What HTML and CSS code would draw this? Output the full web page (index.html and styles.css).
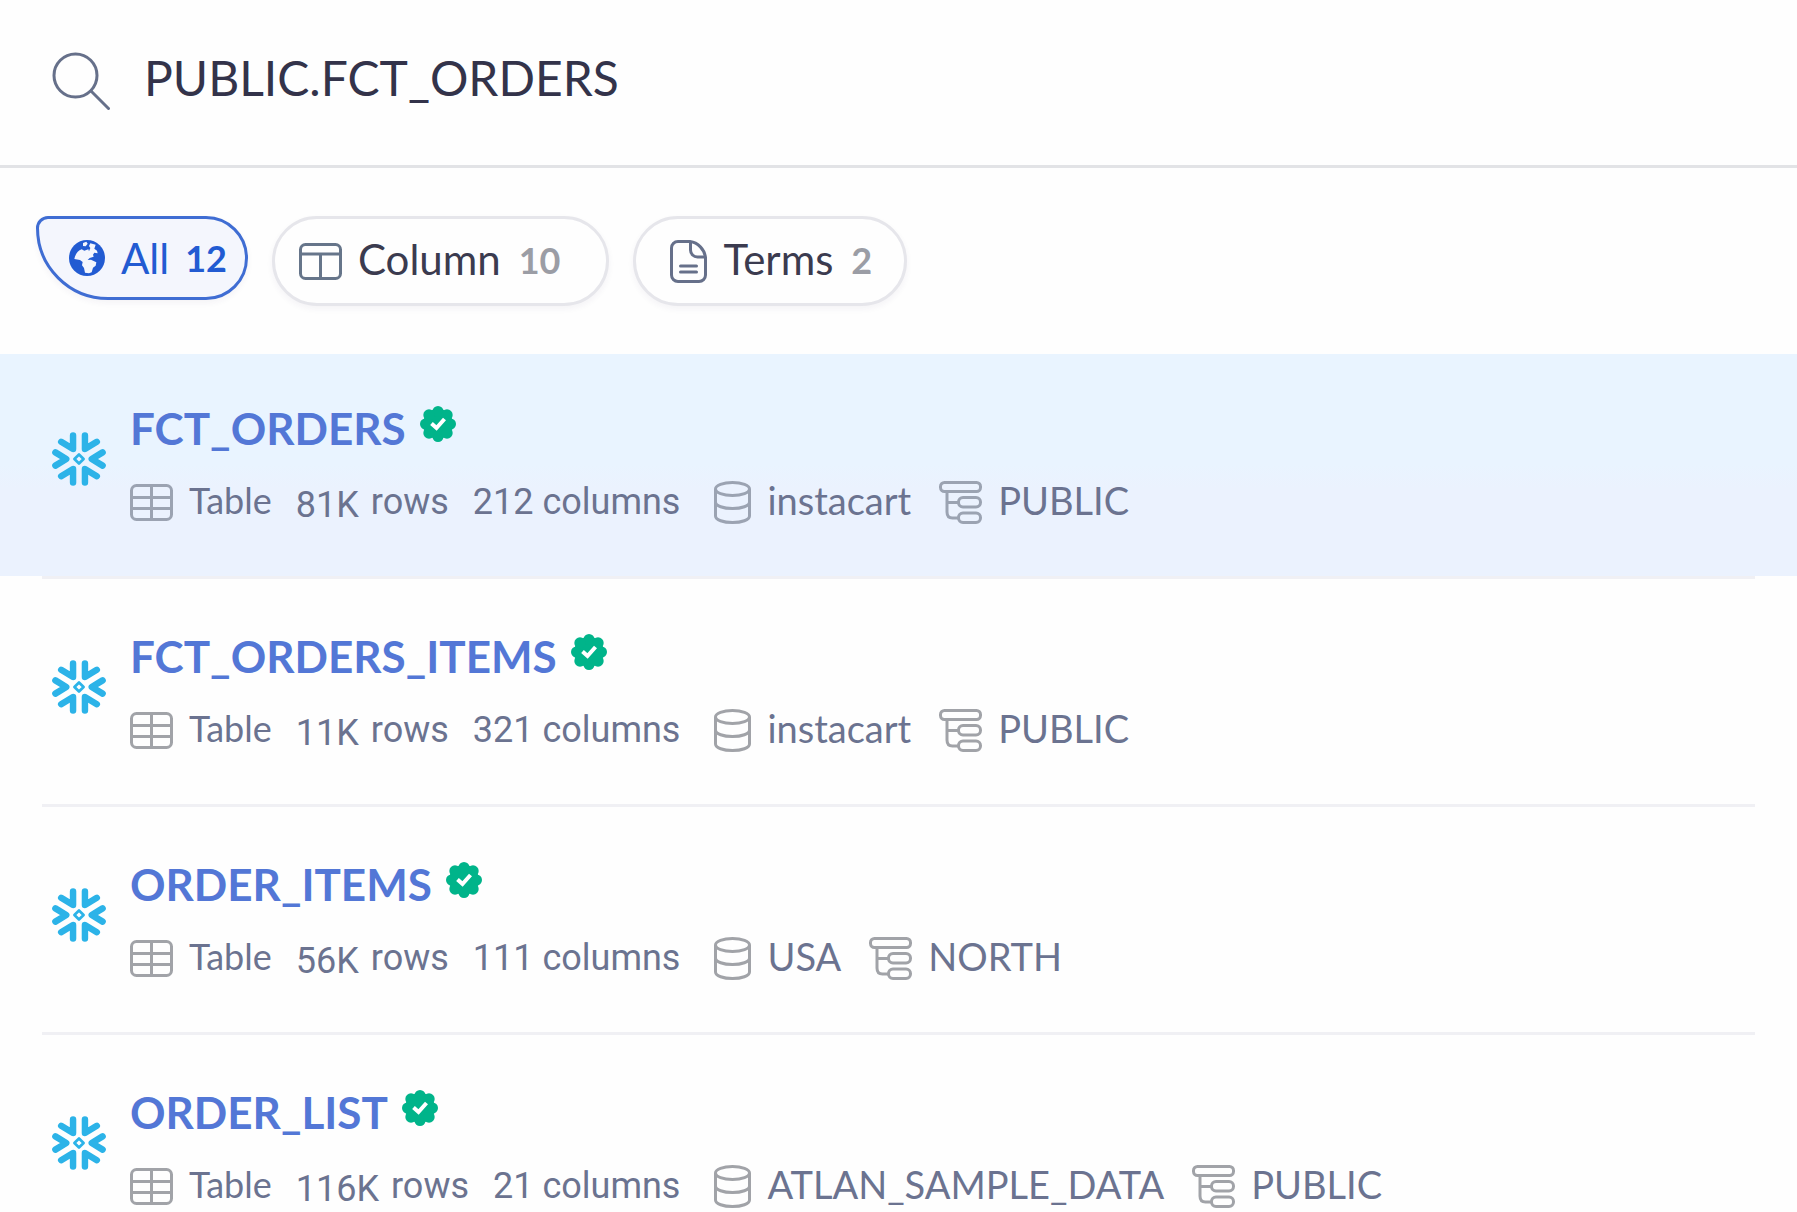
FILE: index.html
```html
<!DOCTYPE html>
<html lang="en">
<head>
    <meta charset="UTF-8">
    <meta name="viewport" content="width=device-width, initial-scale=1">
    <title>Search</title>
    <link rel="stylesheet" href="styles.css">
</head>
<body>
    <svg class="sprite" aria-hidden="true">
        <symbol id="snowflake" viewBox="0 0 159 159">
            <g fill="none" stroke="currentColor" stroke-width="19" stroke-linecap="round" stroke-linejoin="round">
                <path d="M62 10v40L27 29M97 10v40l35-21M62 149v-40l-35 21M97 149v-40l35 21M10 60l32 19.500L10 99M149 60l-32 19.500L149 99"/>
            </g>
            <path d="M79.500 66l13.500 13.500-13.500 13.500L66 79.500z" fill="none" stroke="currentColor" stroke-width="8" stroke-linejoin="round"/>
        </symbol>
        <symbol id="verified" viewBox="0 0 36 36">
            <g fill="#00b48a">
                <circle cx="18" cy="18" r="15"/>
                <circle cx="18" cy="5.500" r="5.500"/>
                <circle cx="18" cy="30.500" r="5.500"/>
                <circle cx="5.500" cy="18" r="5.500"/>
                <circle cx="30.500" cy="18" r="5.500"/>
                <circle cx="9" cy="9" r="5.700"/>
                <circle cx="27" cy="9" r="5.700"/>
                <circle cx="9" cy="27" r="5.700"/>
                <circle cx="27" cy="27" r="5.700"/>
            </g>
            <path d="M11.500 17.500l5 4.500L24.500 13" fill="none" stroke="#fff" stroke-width="4"/>
        </symbol>
        <symbol id="table" viewBox="0 0 43 37">
            <g fill="none" stroke="currentColor" stroke-width="3">
                <rect x="1.500" y="1.500" width="40" height="34" rx="5"/>
                <path d="M21.500 2v33M2 13.500h39M2 24.500h39"/>
            </g>
        </symbol>
        <symbol id="database" viewBox="0 0 37 43">
            <g fill="none" stroke="currentColor" stroke-width="3">
                <ellipse cx="18.500" cy="8" rx="17" ry="6.500"/>
                <path d="M1.500 8v27c0 4 8 6.500 17 6.500s17-2.500 17-6.500V8M1.500 21c0 4 8 6.500 17 6.500s17-2.500 17-6.500"/>
            </g>
        </symbol>
        <symbol id="schema" viewBox="0 0 43 43">
            <g fill="none" stroke="currentColor" stroke-width="3">
                <rect x="1.500" y="1.500" width="40" height="9" rx="4"/>
                <rect x="19.500" y="16.500" width="22" height="9.500" rx="4.500"/>
                <rect x="19.500" y="32" width="22" height="9.500" rx="4.500"/>
                <path d="M8 10.500V31c0 4 2 6 5.500 6h6M8 21.500h11.500"/>
            </g>
        </symbol>
    </svg>

    <form class="search" role="search">
        <label for="searchInput" aria-label="Search">
            <svg class="search-icon" viewBox="0 0 58 58" fill="none" stroke="#66708a" stroke-width="3" stroke-linecap="round">
                <circle cx="23.500" cy="23.500" r="21.500"/>
                <path d="M39 39l17.500 17.500"/>
            </svg>
        </label>
        <input type="text" id="searchInput" value="PUBLIC.FCT_ORDERS">
    </form>

    <div class="filters">
        <button type="button" class="chip chip-active">
            <svg class="icon-globe" viewBox="0 0 108 108">
                <circle cx="54" cy="54" r="54" fill="#225bd2"/>
                <path d="M16 57c2-12 10-26 22-29l8 4 12-4 2 6 4-10-4-6 4-8 16 4-4 12 8 6 2 8-10-2-4 6 2 6-12 4-6 6 10-1 16 8-2 10-8 6-4 14-8 3-12-2-3-14-6-8 2-10-8-6zM42 9l10-4 4 6-6 8-8-1z" fill="#f4f6fd"/>
            </svg>
            <span class="label">All</span>
            <span class="count">12</span>
        </button>
        <button type="button" class="chip">
            <svg class="icon-column" viewBox="0 0 43 37" fill="none" stroke="#66758a" stroke-width="3">
                <rect x="1.500" y="1.500" width="40" height="34" rx="5"/>
                <path d="M2 11h39M21.500 11v24"/>
            </svg>
            <span class="label">Column</span>
            <span class="count">10</span>
        </button>
        <button type="button" class="chip chip-terms">
            <svg class="icon-terms" viewBox="0 0 37 43" fill="none" stroke="#66708a" stroke-width="3">
                <path d="M8 1.500h12c8 1 14.500 8 15.500 16V35a6.500 6.500 0 0 1-6.500 6.500H8A6.500 6.500 0 0 1 1.500 35V8A6.500 6.500 0 0 1 8 1.500zM20.500 2v8a7 7 0 0 0 7 7h8"/>
                <path d="M10.500 26h16M10.500 32h16" stroke-linecap="round"/>
            </svg>
            <span class="label">Terms</span>
            <span class="count">2</span>
        </button>
    </div>

    <ul class="results">
        <li>
            <div class="result result-active">
                <svg class="source"><use href="#snowflake"/></svg>
                <div class="info">
                    <h2><a href="#">FCT_ORDERS</a> <svg class="verified"><use href="#verified"/></svg></h2>
                    <div class="meta">
                        <svg class="icon-table"><use href="#table"/></svg>
                        <span class="type">Table</span>
                        <span class="number">81K</span>
                        <span class="rows">rows</span>
                        <span class="columns">212 columns</span>
                        <svg class="icon-db"><use href="#database"/></svg>
                        <span class="name">instacart</span>
                        <svg class="icon-schema"><use href="#schema"/></svg>
                        <span class="name">PUBLIC</span>
                    </div>
                </div>
            </div>
        </li>
        <li>
            <div class="result">
                <svg class="source"><use href="#snowflake"/></svg>
                <div class="info">
                    <h2><a href="#">FCT_ORDERS_ITEMS</a> <svg class="verified"><use href="#verified"/></svg></h2>
                    <div class="meta">
                        <svg class="icon-table"><use href="#table"/></svg>
                        <span class="type">Table</span>
                        <span class="number">11K</span>
                        <span class="rows">rows</span>
                        <span class="columns">321 columns</span>
                        <svg class="icon-db"><use href="#database"/></svg>
                        <span class="name">instacart</span>
                        <svg class="icon-schema"><use href="#schema"/></svg>
                        <span class="name">PUBLIC</span>
                    </div>
                </div>
            </div>
        </li>
        <li>
            <div class="result">
                <svg class="source"><use href="#snowflake"/></svg>
                <div class="info">
                    <h2><a href="#">ORDER_ITEMS</a> <svg class="verified"><use href="#verified"/></svg></h2>
                    <div class="meta">
                        <svg class="icon-table"><use href="#table"/></svg>
                        <span class="type">Table</span>
                        <span class="number">56K</span>
                        <span class="rows">rows</span>
                        <span class="columns">111 columns</span>
                        <svg class="icon-db"><use href="#database"/></svg>
                        <span class="name">USA</span>
                        <svg class="icon-schema"><use href="#schema"/></svg>
                        <span class="name">NORTH</span>
                    </div>
                </div>
            </div>
        </li>
        <li>
            <div class="result">
                <svg class="source"><use href="#snowflake"/></svg>
                <div class="info">
                    <h2><a href="#">ORDER_LIST</a> <svg class="verified"><use href="#verified"/></svg></h2>
                    <div class="meta">
                        <svg class="icon-table"><use href="#table"/></svg>
                        <span class="type">Table</span>
                        <span class="number">116K</span>
                        <span class="rows">rows</span>
                        <span class="columns">21 columns</span>
                        <svg class="icon-db"><use href="#database"/></svg>
                        <span class="name">ATLAN_SAMPLE_DATA</span>
                        <svg class="icon-schema"><use href="#schema"/></svg>
                        <span class="name">PUBLIC</span>
                    </div>
                </div>
            </div>
        </li>
    </ul>
</body>
</html>
```

FILE: styles.css
```css
* {
    box-sizing: border-box;
}
body {
    margin: 0;
    background-color: #fefefe;
    font-family: Lato, sans-serif;
    color: #3b3b4f;
}
svg {
    flex-shrink: 0;
    display: block;
}
.sprite {
    display: none;
}

/* search bar */
.search {
    display: flex;
    align-items: center;
    gap: 34px;
    height: 168px;
    padding: 0 52px 4px;
    border-bottom: 3px solid #e2e3e6;
}
.search-icon {
    width: 58px;
    height: 58px;
}
.search input {
    flex: 1;
    min-width: 0;
    padding: 0 0 6px;
    border: none;
    outline: none;
    background: none;
    font-family: Lato, sans-serif;
    font-size: 48px;
    color: #33334a;
}

/* filters */
.filters {
    display: flex;
    align-items: flex-start;
    gap: 24px;
    padding: 48px 36px;
}
.chip {
    display: flex;
    align-items: center;
    height: 90px;
    padding: 0 46px 0 24px;
    border: 3px solid #e6e6eb;
    border-radius: 45px;
    background-color: #fefefe;
    box-shadow: 0 3px 6px rgba(60, 40, 90, 0.05);
    font-family: Lato, sans-serif;
    font-size: 42px;
    line-height: 48px;
    color: #3b3b4f;
    cursor: pointer;
}
.chip svg {
    margin-right: 16px;
}
.chip .label {
    padding-bottom: 4px;
}
.chip-terms {
    padding: 0 32px 0 34px;
}
.chip-active {
    height: 84px;
    padding: 0 18px 0 30px;
    border-color: #3f6dd3;
    border-radius: 12px 42px 42px 72px;
    background-color: #f4f6fd;
    color: #225bd2;
}
.chip-active .label {
    padding-bottom: 0;
}
.count {
    margin-left: 18px;
    padding-bottom: 2px;
    font-size: 36px;
    font-weight: bold;
    color: #9b9da5;
}
.chip-active .count {
    margin-left: 16px;
    padding-bottom: 0;
    color: #225bd2;
}
.icon-globe {
    width: 36px;
    height: 36px;
}

/* results */
.results {
    list-style: none;
    margin: 0;
    padding: 0;
}
.results li::after {
    content: "";
    display: block;
    height: 3px;
    margin: 0 42px 3px;
    background-color: #f0f0f4;
}
.results li:last-child::after {
    display: none;
}
.result {
    display: flex;
    gap: 24px;
    height: 222px;
    padding: 50px 52px 0;
    color: #a1a3a8;
}
.results li:last-child .result {
    height: 174px;
}
.result-active {
    background: linear-gradient(#e9f4ff 50%, #ebf2fe 60%);
    color: #9ba3b2;
}
.source {
    width: 54px;
    height: 54px;
    margin-top: 28px;
    color: #2cb3e8;
}
.info h2 {
    display: flex;
    align-items: flex-start;
    gap: 14px;
    margin: 0;
    font-size: 44px;
    line-height: 48px;
}
.info a {
    color: #5377d6;
    text-decoration: none;
}
.verified {
    width: 36px;
    height: 36px;
    margin-top: 2px;
}
.meta {
    display: flex;
    align-items: center;
    margin-top: 22px;
    font-size: 36px;
    line-height: 50px;
}
.meta span {
    color: #6b7390;
    white-space: nowrap;
}
.icon-table,
.icon-column {
    width: 43px;
    height: 37px;
}
.icon-db,
.icon-terms {
    width: 37px;
    height: 43px;
}
.icon-schema {
    width: 43px;
    height: 43px;
}
.type,
.name {
    padding-bottom: 4px;
}
.type {
    margin: 0 24px 0 16px;
}
.number,
.rows,
.columns {
    font-family: Roboto, sans-serif;
}
.number {
    margin-right: 12px;
    padding-top: 6px;
}
.rows {
    margin-right: 24px;
}
.columns {
    margin-right: 34px;
}
.name {
    margin: 0 28px 0 16px;
    font-size: 38px;
}
```
